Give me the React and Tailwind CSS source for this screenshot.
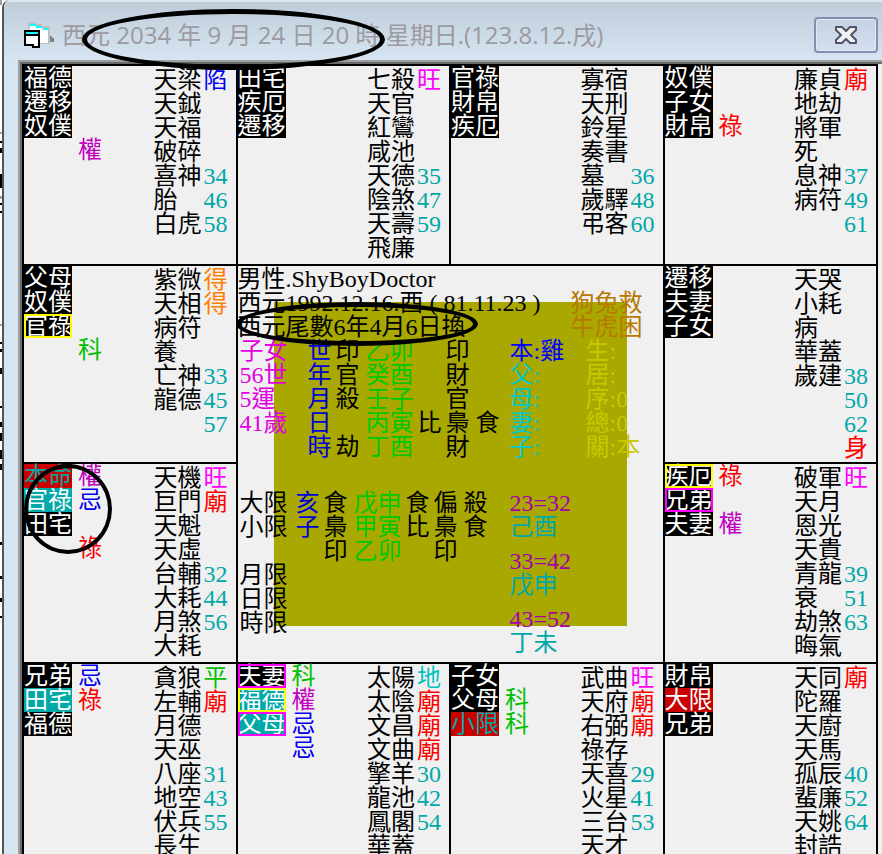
import clsx from "clsx";

// text colours used by the chart
const ink = {
  black: "text-black",
  red: "text-[#ff0000]",
  blue: "text-[#0000f0]",
  green: "text-[#00c000]",
  teal: "text-[#00a8a8]",
  cyan: "text-[#00c0c0]",
  purple: "text-[#c000c0]",
  pink: "text-[#ff00ff]",
  orange: "text-[#ff8000]",
};

const badgeStyles = {
  black: "bg-black text-white",
  yellow: "bg-black text-white outline-2 -outline-offset-2 outline-[#ffff00]",
  pink: "bg-black text-white outline-2 -outline-offset-2 outline-[#ff00ff]",
  teal: "bg-[#00a8a8] text-white",
  tealYellow: "bg-[#00a8a8] text-white outline-2 -outline-offset-2 outline-[#ffff00]",
  tealPink: "bg-[#00a8a8] text-white outline-2 -outline-offset-2 outline-[#ff00ff]",
  red: "bg-[#c80000] text-white",
  redTeal: "bg-[#c80000] text-[#00a8a8]",
};

const LU = ["祿", "red"];
const QUAN = ["權", "purple"];
const KE = ["科", "green"];
const JI = ["忌", "blue"];
const MIAO = ["廟", "red"];
const WANG = ["旺", "pink"];

// badges: [text, style], marks: one slot per line, sides: brightness or age per line
const palaces = {
  si: {
    badges: [["福德", "black"], ["遷移", "black"], ["奴僕", "black"]],
    marks: [null, null, null, QUAN],
    stars: ["天梁", "天鉞", "天福", "破碎", "喜神", "胎", "白虎"],
    sides: [["陷", "blue"], null, null, null, "34", "46", "58"],
  },
  wu: {
    badges: [["田宅", "black"], ["疾厄", "black"], ["遷移", "black"]],
    marks: [],
    stars: ["七殺", "天官", "紅鸞", "咸池", "天德", "陰煞", "天壽", "飛廉"],
    sides: [WANG, null, null, null, "35", "47", "59"],
  },
  wei: {
    badges: [["官祿", "black"], ["財帛", "black"], ["疾厄", "black"]],
    marks: [],
    stars: ["寡宿", "天刑", "鈴星", "奏書", "墓", "歲驛", "弔客"],
    sides: [null, null, null, null, "36", "48", "60"],
  },
  shen: {
    badges: [["奴僕", "black"], ["子女", "black"], ["財帛", "black"]],
    marks: [null, null, LU],
    stars: ["廉貞", "地劫", "將軍", "死", "息神", "病符"],
    sides: [MIAO, null, null, null, "37", "49", "61"],
  },
  chen: {
    badges: [["父母", "black"], ["奴僕", "black"], ["官祿", "yellow"]],
    marks: [null, null, null, KE],
    stars: ["紫微", "天相", "病符", "養", "亡神", "龍德"],
    sides: [["得", "orange"], ["得", "orange"], null, null, "33", "45", "57"],
  },
  you: {
    badges: [["遷移", "black"], ["夫妻", "black"], ["子女", "black"]],
    marks: [],
    stars: ["天哭", "小耗", "病", "華蓋", "歲建"],
    sides: [null, null, null, null, "38", "50", "62", ["身", "red"]],
  },
  mao: {
    badges: [["本命", "redTeal"], ["官祿", "teal"], ["田宅", "black"]],
    marks: [QUAN, JI, null, LU],
    stars: ["天機", "巨門", "天魁", "天虛", "台輔", "大耗", "月煞", "大耗"],
    sides: [WANG, MIAO, null, null, "32", "44", "56"],
    circled: true,
  },
  xu: {
    badges: [["疾厄", "yellow"], ["兄弟", "pink"], ["夫妻", "black"]],
    marks: [LU, null, QUAN],
    stars: ["破軍", "天月", "恩光", "天貴", "青龍", "衰", "劫煞", "晦氣"],
    sides: [WANG, null, null, null, "39", "51", "63"],
  },
  yin: {
    badges: [["兄弟", "black"], ["田宅", "teal"], ["福德", "black"]],
    marks: [JI, LU],
    stars: ["貪狼", "左輔", "月德", "天巫", "八座", "地空", "伏兵", "長生"],
    sides: [["平", "green"], MIAO, null, null, "31", "43", "55"],
  },
  chou: {
    badges: [["夫妻", "pink"], ["福德", "tealYellow"], ["父母", "tealPink"]],
    marks: [KE, QUAN, JI, JI],
    stars: ["太陽", "太陰", "文昌", "文曲", "擎羊", "龍池", "鳳閣", "華蓋"],
    sides: [["地", "cyan"], MIAO, MIAO, MIAO, "30", "42", "54"],
  },
  zi: {
    badges: [["子女", "black"], ["父母", "black"], ["小限", "redTeal"]],
    marks: [null, KE, KE],
    stars: ["武曲", "天府", "右弼", "祿存", "天喜", "火星", "三台", "天才"],
    sides: [WANG, MIAO, MIAO, null, "29", "41", "53"],
  },
  hai: {
    badges: [["財帛", "black"], ["大限", "red"], ["兄弟", "black"]],
    marks: [],
    stars: ["天同", "陀羅", "天廚", "天馬", "孤辰", "蜚廉", "天姚", "封誥"],
    sides: [MIAO, null, null, null, "40", "52", "64"],
  },
};

const majorRows = [
  { text: "23=32", pillar: "己酉" },
  { text: "33=42", pillar: "戊申" },
  { text: "43=52", pillar: "丁未" },
];

function Lines({ items, className }) {
  return (
    <div className={className}>
      {items.map((item, i) => (
        <div key={i} className="h-6 whitespace-nowrap">{item}</div>
      ))}
    </div>
  );
}

function Slots({ items, className }) {
  return (
    <div className={clsx("w-6", className)}>
      {items.map((item, i) => {
        const [text, color] = Array.isArray(item) ? item : [item, "teal"];
        return (
          <div key={i} className={clsx("h-6", ink[color])}>{text}</div>
        );
      })}
    </div>
  );
}

function Palace({ data }) {
  return (
    <section className="relative flex bg-[#f0f0f0]">
      <div className="w-12">
        {data.badges.map(([text, style]) => (
          <div key={text} className={clsx("h-6", badgeStyles[style])}>{text}</div>
        ))}
      </div>
      <Slots items={data.marks} className="ml-1.5" />
      <div className="ml-auto flex gap-0.5 pt-0.5 pr-2">
        <Lines items={data.stars} className="w-12" />
        <Slots items={data.sides} />
      </div>
      {data.circled && (
        <div className="absolute top-0 left-0 z-10 h-[90px] w-[88px] rounded-[50%] border-4 border-black" />
      )}
    </section>
  );
}

function Center() {
  return (
    <section className="relative col-span-2 row-span-2 bg-[#f0f0f0]">
      <div className="absolute inset-9 bg-[#a8a800]" />

      <div className="relative pt-px">
        <header className="flex justify-between pr-5">
          <Lines
            items={["男性.ShyBoyDoctor", "西元1992.12.16.酉 ( 81.11.23 )", "西元尾數6年4月6日換"]}
          />
          <Lines items={["", "狗兔救", "牛虎困"]} className="text-[#b87800]" />
        </header>

        {/* birth pillars */}
        <div className="grid grid-cols-[68px_28px_30px_52px_28px_30px_34px_76px_auto] pl-0.5">
          <Lines items={["子女", "56世", "5運", "41歲"]} className="text-[#e000e0]" />
          <Lines items={["世", "年", "月", "日", "時"]} className="text-[#0000d8]" />
          <Lines items={["印", "官", "殺", "", "劫"]} />
          <Lines items={["乙卯", "癸酉", "壬子", "丙寅", "丁酉"]} className="text-[#00c800]" />
          <Lines items={["", "", "", "比"]} />
          <Lines items={["印", "財", "官", "梟", "財"]} />
          <Lines items={["", "", "", "食"]} />
          <Lines
            items={[<span className="text-[#0000ff]">本:雞</span>, "父:", "母:", "妻:", "子:"]}
            className="text-[#00c8c8]"
          />
          <Lines items={["生:", "居:", "序:0", "總:0", "關:本"]} className="text-[#c8c800]" />
        </div>

        {/* running limits */}
        <div className="mt-8 grid grid-cols-[56px_28px_30px_52px_28px_30px_46px_auto] pl-0.5">
          <Lines items={["大限", "小限", "", "月限", "日限", "時限"]} />
          <Lines items={["亥", "子"]} className="text-[#0000d8]" />
          <Lines items={["食", "梟", "印"]} />
          <Lines items={["戊申", "甲寅", "乙卯"]} className="text-[#00c800]" />
          <Lines items={["食", "比"]} />
          <Lines items={["偏", "梟", "印"]} />
          <Lines items={["殺", "食"]} />
          <div className="flex flex-col gap-2.5">
            {majorRows.map((row) => (
              <div key={row.text}>
                <div className="text-[#a800a8]">{row.text}</div>
                <div className="text-[#00a8a8]">{row.pillar}</div>
              </div>
            ))}
          </div>
        </div>
      </div>

      <div className="absolute top-9 -left-0.5 z-10 h-11 w-[242px] rounded-[50%] border-[5px] border-black" />
    </section>
  );
}

function FormIcon() {
  return (
    <svg width="30" height="28" viewBox="0 0 30 28" shapeRendering="crispEdges" aria-hidden="true">
      {/* back window */}
      <path d="M4 1h8v2h6v2h8v18H14V8H4z" fill="#c0c0c0" />
      <path d="M6 5h6v2h6v2h6v13h-8V9H6z" fill="#fff" />
      <path d="M6 3h6v2H6zM12 5h6v2h-6zM20 7h4v2h-4z" fill="#00ffff" />
      <path d="M26 15h2v2h2v4h-4z" fill="#808080" />
      {/* front window */}
      <path d="M0 9h16v18H8v-2H0z" fill="#000" />
      <path d="M2 15h12v10H10v-2H2z" fill="#fff" />
      <path d="M2 11h6v2H2zM8 13h6v-2H8z" fill="#00ffff" />
    </svg>
  );
}

function TitleBar() {
  return (
    <header className="flex h-15 shrink-0 items-center justify-between border-t-2 border-[#dfe8f1] bg-linear-to-b from-[#bfcddb] to-[#d7e4f2] pt-2 pr-1 pl-5">
      <div className="flex items-center gap-2">
        <FormIcon />
        <h1 className="relative text-2xl whitespace-pre text-[#9c9a9e] [font-family:'Open_Sans','Noto_Sans_CJK_TC',sans-serif]">
          西元 2034 年 9 月 24 日 20 時.星期日.(123.8.12.戌)
          <span className="absolute -top-2.5 left-5 z-10 h-[61px] w-[303px] rounded-[50%] border-[5px] border-black" />
        </h1>
      </div>
      <button
        type="button"
        aria-label="關閉"
        className="flex h-9 w-16 items-center justify-center rounded-sm border-2 border-[#8391b0] bg-linear-to-b from-[#c5d2e1] to-[#d3dfee] inset-ring-1 inset-ring-[#dfe8f3]"
      >
        <svg width="24" height="20" viewBox="0 0 24 20" aria-hidden="true">
          <path
            d="M2 2h6l4 4 4-4h6v3l-5 5 5 5v3h-6l-4-4-4 4H2v-3l5-5-5-5z"
            fill="#f2f2f4"
            stroke="#4f5566"
            strokeWidth="2"
            strokeLinejoin="round"
          />
        </svg>
      </button>
    </header>
  );
}

export default function App() {
  const p = palaces;

  return (
    <div className="flex h-screen overflow-hidden bg-white">
      {/* sliver of the window behind */}
      <svg className="w-0.5 shrink-0" height="854" shapeRendering="crispEdges" aria-hidden="true">
        <path d="M0 0h2v5H0zM0 132h2v2H0zM0 196h2v3H0zM0 324h2v2H0z" fill="#a0a0a0" />
        <path
          d="M0 141h2v2H0zM0 148h2v5H0zM0 174h2v14H0zM0 203h2v2H0zM0 211h2v2H0zM0 342h2v2H0zM0 349h2v3H0zM0 368h2v6H0zM0 406h2v2H0zM0 422h2v5H0zM0 433h2v8H0zM0 450h2v9H0zM0 464h2v6H0zM0 542h2v3H0zM0 576h2v3H0zM0 598h2v4H0zM0 616h2v2H0z"
          fill="#000"
        />
      </svg>

      <main className="flex min-w-0 flex-1 flex-col overflow-hidden rounded-tl-lg border-l-2 border-[#555550] bg-[#d7e4f2]">
        <TitleBar />
        <div className="ml-3.5 min-h-0 flex-1 border-t-2 border-l-2 border-[#a0a0a0]">
          <div className="h-full border-t-2 border-l-2 border-[#696969] bg-[#f0f0f0] pr-1">
            <div className="grid h-full grid-cols-4 grid-rows-[198px_196px_198px_auto] gap-0.5 border-x-2 border-t-2 border-black bg-black text-2xl leading-6 [font-family:'Liberation_Serif','Noto_Sans_CJK_TC',serif]">
              <Palace data={p.si} />
              <Palace data={p.wu} />
              <Palace data={p.wei} />
              <Palace data={p.shen} />
              <Palace data={p.chen} />
              <Center />
              <Palace data={p.you} />
              <Palace data={p.mao} />
              <Palace data={p.xu} />
              <Palace data={p.yin} />
              <Palace data={p.chou} />
              <Palace data={p.zi} />
              <Palace data={p.hai} />
            </div>
          </div>
        </div>
      </main>
    </div>
  );
}
